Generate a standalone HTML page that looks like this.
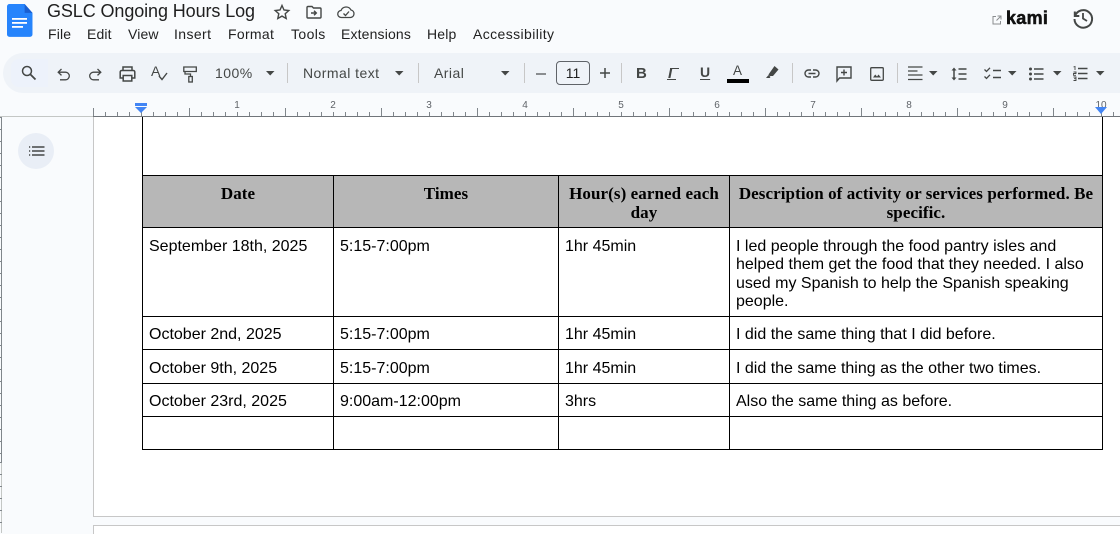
<!DOCTYPE html>
<html><head><meta charset="utf-8">
<style>
html,body{margin:0;padding:0;width:1120px;height:533px;overflow:hidden;background:#f9fbfd;font-family:"Liberation Sans",sans-serif}
.a{position:absolute;white-space:nowrap}
.menu{top:25px;font-size:14px;color:#1f1f1f;line-height:18px;letter-spacing:.15px}
.tb{top:64px;font-size:14px;color:#444746;line-height:18px;letter-spacing:.45px}
.sep{position:absolute;top:63px;width:1px;height:20px;background:#c7c7c7}
.num{position:absolute;top:100px;width:12px;text-align:center;font-size:10px;line-height:12px;color:#5f6368;font-weight:400}
.l{position:absolute;background:#000}
.h{position:absolute;font-family:"Liberation Serif",serif;font-weight:700;font-size:17px;line-height:19px;color:#000;text-align:center;letter-spacing:.08px}
.c{position:absolute;font-size:16px;line-height:18.4px;color:#000;white-space:nowrap;margin-top:0}
svg{position:absolute;overflow:visible}
</style></head>
<body>
<!-- docs logo -->
<svg style="left:7px;top:4px" width="26" height="34" viewBox="0 0 26 34"><path d="M2.5 0H18L26 9V31a2.500 2.500 0 0 1-2.500 2.500H2.500A2.500 2.500 0 0 1 0 31V2.500A2.500 2.500 0 0 1 2.500 0Z" transform="scale(.98 .98)" fill="#2684fc"/><path d="M18 0v9h8z" transform="scale(.98 .98)" fill="#1a5fd0"/><rect x="5" y="14" width="15" height="1.800" fill="#fff"/><rect x="5" y="18" width="15" height="1.800" fill="#fff"/><rect x="5" y="22" width="11" height="1.800" fill="#fff"/></svg>
<div class="a" style="left:47px;top:0;font-size:18px;line-height:22px;color:#1f1f1f;letter-spacing:-.1px">GSLC Ongoing Hours Log</div>
<svg style="left:274px;top:4px" width="16" height="16" viewBox="0 0 16 16"><path d="M8 1.500l2 4.500 4.800.5-3.600 3.200 1 4.800L8 12.100l-4.200 2.400 1-4.800L1.200 6.500 6 6z" fill="none" stroke="#444746" stroke-width="1.400"/></svg>
<svg style="left:306px;top:5px" width="16" height="14" viewBox="0 0 16 14"><path d="M1 2.500a1 1 0 0 1 1-1h4l1.500 1.500H14a1 1 0 0 1 1 1V12a1 1 0 0 1-1 1H2a1 1 0 0 1-1-1z" fill="none" stroke="#444746" stroke-width="1.400"/><path d="M5 8h5M8 5.800L10.300 8 8 10.200" fill="none" stroke="#444746" stroke-width="1.400"/></svg>
<svg style="left:337px;top:5px" width="18" height="14" viewBox="0 0 18 14"><path d="M4.500 12.500a3.500 3.500 0 0 1-.5-7A5.500 5.500 0 0 1 14 5a3.800 3.800 0 0 1-.5 7.500z" fill="none" stroke="#444746" stroke-width="1.300"/><path d="M6.500 8.500l2 2 3.500-4" fill="none" stroke="#444746" stroke-width="1.300"/></svg>
<div class="a menu" style="left:48px">File</div>
<div class="a menu" style="left:87px">Edit</div>
<div class="a menu" style="left:128px">View</div>
<div class="a menu" style="left:174px;letter-spacing:.4px">Insert</div>
<div class="a menu" style="left:228px;letter-spacing:.3px">Format</div>
<div class="a menu" style="left:291px;letter-spacing:.4px">Tools</div>
<div class="a menu" style="left:341px">Extensions</div>
<div class="a menu" style="left:427px">Help</div>
<div class="a menu" style="left:473px;letter-spacing:.4px">Accessibility</div>
<!-- kami -->
<svg style="left:992px;top:15px" width="10" height="10" viewBox="0 0 10 10"><path d="M4 1.500H1v7.500h7.500V6M5.500 1h3.500v3.500M9 1L4.500 5.500" fill="none" stroke="#8a8d90" stroke-width="1"/></svg>
<div class="a" style="left:1006px;top:9px;font-size:18px;font-weight:700;line-height:19px;color:#111;letter-spacing:.3px;-webkit-text-stroke:.5px #111">kami</div>
<svg style="left:1072px;top:7px" width="22" height="22" viewBox="0 0 22 22"><path d="M2.800 4.500v4.500h4.500M3 9a8.800 8.800 0 1 1-.5 3" fill="none" stroke="#444746" stroke-width="2"/><path d="M11 6v5.500l4 2.500" fill="none" stroke="#444746" stroke-width="1.800"/></svg>
<!-- toolbar -->
<div class="a" style="left:3px;top:53px;width:1140px;height:40px;border-radius:20px;background:#eff3f8"></div>
<div class="a" style="left:11px;top:59px;width:37px;height:28px;background:#edf2fb;border-radius:8px 0 0 8px"></div>
<svg style="left:21px;top:65px" width="15" height="15" viewBox="0 0 15 15"><circle cx="6" cy="6" r="4.500" fill="none" stroke="#444746" stroke-width="1.500"/><path d="M9.500 9.500l5 5" stroke="#444746" stroke-width="1.800"/></svg>
<svg style="left:57px;top:68px" width="13" height="13" viewBox="0 0 13 13"><path d="M4.500 1L1.200 4.200 4.500 7.400M1.500 4.200H8.500a3.700 3.700 0 0 1 0 7.600H3" fill="none" stroke="#444746" stroke-width="1.300"/></svg>
<svg style="left:89px;top:68px" width="13" height="13" viewBox="0 0 13 13"><path d="M8.500 1l3.300 3.200L8.500 7.400M11.500 4.200H4.500a3.700 3.700 0 0 0 0 7.600H10" fill="none" stroke="#444746" stroke-width="1.300"/></svg>
<svg style="left:119px;top:66px" width="17" height="16" viewBox="0 0 17 16"><path d="M4 4.500V1h9v3.500M4 12H1.200V6a1.500 1.500 0 0 1 1.500-1.500h11.600A1.500 1.500 0 0 1 15.800 6v6H13" fill="none" stroke="#444746" stroke-width="1.500"/><rect x="4.200" y="9.500" width="8.600" height="5.500" fill="none" stroke="#444746" stroke-width="1.500"/></svg>
<div class="a" style="left:151px;top:63px;font-size:14px;line-height:16px;color:#444746">A</div>
<svg style="left:158px;top:72px" width="10" height="9" viewBox="0 0 10 9"><path d="M1 4l3 3.500L9 1" fill="none" stroke="#444746" stroke-width="1.400"/></svg>
<svg style="left:183px;top:66px" width="15" height="17" viewBox="0 0 15 17"><path d="M.8 1h12.500v4.500H.8z" fill="none" stroke="#444746" stroke-width="1.300"/><rect x="5.800" y="10.500" width="3.500" height="5.500" fill="none" stroke="#444746" stroke-width="1.300"/><path d="M2 5.500V8h5.500v2.500" fill="none" stroke="#444746" stroke-width="1.300"/></svg>
<div class="a tb" style="left:215px">100%</div>
<svg style="left:266px;top:71px" width="9" height="5"><path d="M0 0h8.500L4.200 4.500z" fill="#444746"/></svg>
<div class="sep" style="left:287px"></div>
<div class="a tb" style="left:303px">Normal text</div>
<svg style="left:395px;top:71px" width="9" height="5"><path d="M0 0h8.500L4.200 4.500z" fill="#444746"/></svg>
<div class="sep" style="left:418px"></div>
<div class="a tb" style="left:434px">Arial</div>
<svg style="left:501px;top:71px" width="9" height="5"><path d="M0 0h8.500L4.200 4.500z" fill="#444746"/></svg>
<div class="sep" style="left:524px"></div>
<div class="a" style="left:536px;top:73px;width:10px;height:1.500px;background:#8a8d90"></div>
<div class="a" style="left:556px;top:61px;width:32px;height:22px;border:1px solid #5f6368;border-radius:4px;text-align:center;font-size:14px;line-height:22px;color:#1f1f1f">11</div>
<svg style="left:600px;top:68px" width="10" height="10"><path d="M5 0v10M0 5h10" stroke="#444746" stroke-width="1.500"/></svg>
<div class="sep" style="left:621px"></div>
<div class="a" style="left:636px;top:65px;font-size:15px;font-weight:700;line-height:18px;color:#444746">B</div>
<div class="a" style="left:668px;top:65px;font-size:15px;font-weight:700;font-style:italic;line-height:18px;color:#444746">I</div>
<div class="a" style="left:667px;top:79px;width:9px;height:1px;background:#444746"></div>
<div class="a" style="left:670px;top:68px;width:9px;height:1px;background:#444746"></div>
<div class="a" style="left:700px;top:63px;font-size:14px;line-height:18px;color:#444746;font-weight:700;text-decoration:underline;text-underline-offset:2px">U</div>
<div class="a" style="left:733px;top:62px;font-size:13.500px;line-height:18px;color:#444746">A</div>
<div class="a" style="left:727px;top:79px;width:22px;height:4px;background:#000"></div>
<svg style="left:765px;top:65px" width="15" height="14" viewBox="0 0 15 14"><path d="M9.500 1l4 3.500L8 11H4.500L3.500 9.500z" fill="#444746"/><path d="M1 13l2.500-3 2 2-.8 1z" fill="#444746"/></svg>
<div class="sep" style="left:792px"></div>
<svg style="left:804px;top:69px" width="16" height="9" viewBox="0 0 16 9"><path d="M7 1H4.500a3.500 3.500 0 0 0 0 7H7M9 1h2.500a3.500 3.500 0 0 1 0 7H9M4.500 4.500h7" fill="none" stroke="#444746" stroke-width="1.400"/></svg>
<svg style="left:836px;top:66px" width="16" height="16" viewBox="0 0 16 16"><path d="M1 1h14v11H3.500L1 15z" fill="none" stroke="#444746" stroke-width="1.400"/><path d="M8 3.500v6M5 6.500h6" stroke="#444746" stroke-width="1.400"/></svg>
<svg style="left:870px;top:67px" width="14" height="14" viewBox="0 0 14 14"><rect x=".7" y=".7" width="12.600" height="12.600" rx="1" fill="none" stroke="#444746" stroke-width="1.300"/><path d="M3 10.500l2.200-3 1.800 2 1.500-2 2.500 3z" fill="#444746"/></svg>
<div class="sep" style="left:897px"></div>
<svg style="left:908px;top:66px" width="15" height="15" viewBox="0 0 15 15"><path d="M0 1h14.500M0 5h9.500M0 9h14.500M0 13.500h14.500" stroke="#444746" stroke-width="1.300"/></svg>
<svg style="left:929px;top:71px" width="9" height="5"><path d="M0 0h8.500L4.200 4.500z" fill="#444746"/></svg>
<svg style="left:951px;top:67px" width="16" height="14" viewBox="0 0 16 14"><path d="M3 2v10" stroke="#444746" stroke-width="1.500"/><path d="M.5 3.500L3 .5l2.500 3zM.5 10.500L3 13.500l2.500-3z" fill="#444746"/><path d="M7.500 2h8M7.500 7h8M7.500 12h8" stroke="#444746" stroke-width="1.400"/></svg>
<svg style="left:984px;top:67px" width="17" height="14" viewBox="0 0 17 14"><path d="M.5 2.500l2 2L6 .8M.5 9.500l2 2L6 7.800" fill="none" stroke="#444746" stroke-width="1.300"/><path d="M9 3.500h8M9 10.500h8" stroke="#444746" stroke-width="1.400"/></svg>
<svg style="left:1008px;top:71px" width="9" height="5"><path d="M0 0h8.500L4.200 4.500z" fill="#444746"/></svg>
<svg style="left:1029px;top:67px" width="15" height="14" viewBox="0 0 15 14"><circle cx="1.500" cy="2" r="1.500" fill="#444746"/><circle cx="1.500" cy="7" r="1.500" fill="#444746"/><circle cx="1.500" cy="12" r="1.500" fill="#444746"/><path d="M5 2h9.500M5 7h9.500M5 12h9.500" stroke="#444746" stroke-width="1.400"/></svg>
<svg style="left:1053px;top:71px" width="9" height="5"><path d="M0 0h8.500L4.200 4.500z" fill="#444746"/></svg>
<svg style="left:1073px;top:66px" width="15" height="15" viewBox="0 0 15 15"><path d="M5 2.500h9.500M5 7.500h9.500M5 12.500h9.500" stroke="#444746" stroke-width="1.400"/><path d="M.5 1L2 .5V4M.5 6h2.500v1.500h-2.500v1.800h2.500M.5 11h2.500v3.500h-2.500M1 12.700h2" fill="none" stroke="#444746" stroke-width=".9"/></svg>
<svg style="left:1096px;top:71px" width="9" height="5"><path d="M0 0h8.500L4.200 4.500z" fill="#444746"/></svg>
<!-- ruler -->
<div class="a" style="left:93px;top:112px;width:1027px;height:4px;background:repeating-linear-gradient(90deg,#80868b 0,#80868b 1px,transparent 1px,transparent 12px)"></div>
<div class="a" style="left:93px;top:108px;width:1027px;height:8px;background:repeating-linear-gradient(90deg,#80868b 0,#80868b 1px,transparent 1px,transparent 96px)"></div>
<div class="a" style="left:0;top:116px;width:93px;height:1px;background:#c4c7c5"></div>
<div class="a" style="left:93px;top:116px;width:1027px;height:1px;background:#70757a"></div>
<div class="num" style="left:231px">1</div><div class="num" style="left:327px">2</div><div class="num" style="left:423px">3</div><div class="num" style="left:519px">4</div><div class="num" style="left:615px">5</div><div class="num" style="left:711px">6</div><div class="num" style="left:807px">7</div><div class="num" style="left:903px">8</div><div class="num" style="left:999px">9</div><div class="num" style="left:1095px">10</div>
<svg style="left:135px;top:103px" width="12" height="10"><rect width="12" height="3" fill="#4285f4"/><path d="M0 4h12L6 10z" fill="#4285f4"/></svg>
<svg style="left:1095px;top:107px" width="12" height="7"><path d="M0 0h12L6 7z" fill="#4285f4"/></svg>
<!-- vertical ruler -->
<div class="a" style="left:0;top:117px;width:2px;height:345px;background:repeating-linear-gradient(180deg,#80868b 0,#80868b 1px,transparent 1px,transparent 12px)"></div>
<div class="a" style="left:1px;top:117px;width:1px;height:416px;background:#c4c7c5"></div>
<div class="a" style="left:0;top:462px;width:2px;height:71px;background:repeating-linear-gradient(180deg,#80868b 0,#80868b 1px,transparent 1px,transparent 12px)"></div>
<div class="a" style="left:1px;top:117px;width:1px;height:346px;background:#80868b"></div>
<!-- outline button -->
<div class="a" style="left:18px;top:133px;width:36px;height:36px;border-radius:50%;background:#e9eef6"></div>
<svg style="left:29px;top:146px" width="16" height="10" viewBox="0 0 16 10"><path d="M0 1h1.200M0 5h1.200M0 9h1.200M3 1h12.500M3 5h12.500M3 9h12.500" stroke="#444746" stroke-width="1.400"/></svg>
<!-- pages -->
<div class="a" style="left:93px;top:117px;width:1027px;height:399px;background:#fff;border-left:1px solid #c7c7c7;border-bottom:1px solid #c7c7c7"></div>
<div class="a" style="left:93px;top:525px;width:1027px;height:8px;background:#fff;border-left:1px solid #c7c7c7;border-top:1px solid #c7c7c7"></div>
<!-- table -->
<div class="a" style="left:143px;top:176px;width:959px;height:51px;background:#b7b7b7"></div>
<div class="l" style="left:142px;top:117px;width:1px;height:333px"></div>
<div class="l" style="left:1102px;top:117px;width:1px;height:333px"></div>
<div class="l" style="left:333px;top:175px;width:1px;height:275px"></div>
<div class="l" style="left:558px;top:175px;width:1px;height:275px"></div>
<div class="l" style="left:729px;top:175px;width:1px;height:275px"></div>
<div class="l" style="left:142px;top:175px;width:961px;height:1px"></div>
<div class="l" style="left:142px;top:227px;width:961px;height:1px"></div>
<div class="l" style="left:142px;top:316px;width:961px;height:1px"></div>
<div class="l" style="left:142px;top:349px;width:961px;height:1px"></div>
<div class="l" style="left:142px;top:383px;width:961px;height:1px"></div>
<div class="l" style="left:142px;top:416px;width:961px;height:1px"></div>
<div class="l" style="left:142px;top:449px;width:961px;height:1px"></div>
<div class="h" style="left:143px;top:184px;width:190px">Date</div>
<div class="h" style="left:334px;top:184px;width:224px">Times</div>
<div class="h" style="left:559px;top:184px;width:170px">Hour(s) earned each<br>day</div>
<div class="h" style="left:730px;top:184px;width:372px">Description of activity or services performed. Be<br>specific.</div>
<div class="c" style="left:149px;top:238px">September 18th, 2025</div>
<div class="c" style="left:340px;top:238px">5:15-7:00pm</div>
<div class="c" style="left:565px;top:238px">1hr 45min</div>
<div class="c" style="left:736px;top:238px">I led people through the food pantry isles and<br>helped them get the food that they needed. I also<br>used my Spanish to help the Spanish speaking<br>people.</div>
<div class="c" style="left:149px;top:326px">October 2nd, 2025</div>
<div class="c" style="left:340px;top:326px">5:15-7:00pm</div>
<div class="c" style="left:565px;top:326px">1hr 45min</div>
<div class="c" style="left:736px;top:326px">I did the same thing that I did before.</div>
<div class="c" style="left:149px;top:360px">October 9th, 2025</div>
<div class="c" style="left:340px;top:360px">5:15-7:00pm</div>
<div class="c" style="left:565px;top:360px">1hr 45min</div>
<div class="c" style="left:736px;top:360px">I did the same thing as the other two times.</div>
<div class="c" style="left:149px;top:393px">October 23rd, 2025</div>
<div class="c" style="left:340px;top:393px">9:00am-12:00pm</div>
<div class="c" style="left:565px;top:393px">3hrs</div>
<div class="c" style="left:736px;top:393px">Also the same thing as before.</div>
</body></html>
